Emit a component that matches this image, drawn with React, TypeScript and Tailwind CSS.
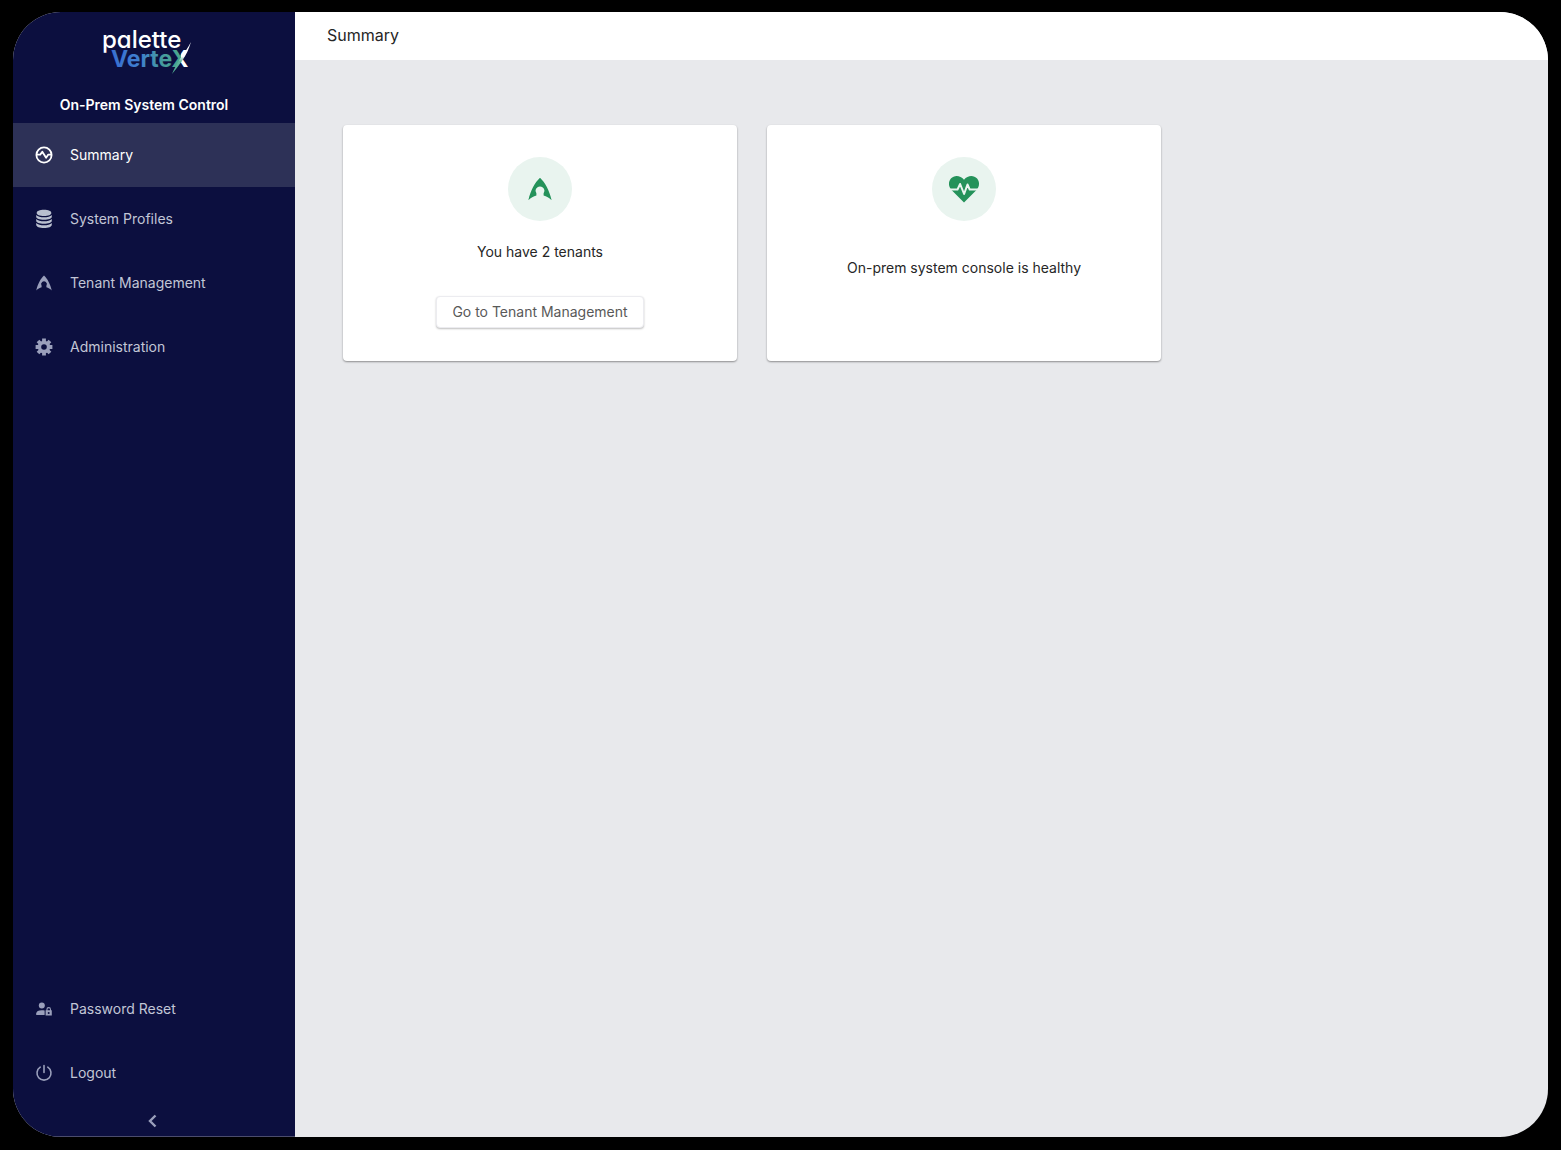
import type { ReactNode } from "react";

function Logo() {
  return (
    <svg className="overflow-visible" width="92" height="48" viewBox="0 0 92 48" role="img" aria-label="Palette VerteX">
      <defs>
        <linearGradient id="vertex" gradientUnits="userSpaceOnUse" x1="9" y1="0" x2="89" y2="0">
          <stop offset="0.1" stopColor="#3a72d0" />
          <stop offset="0.35" stopColor="#3f7fd0" />
          <stop offset="0.65" stopColor="#459b9c" />
          <stop offset="0.87" stopColor="#4aa88c" />
          <stop offset="0.87" stopColor="#ffffff" />
        </linearGradient>
        <linearGradient id="slash" gradientUnits="userSpaceOnUse" x1="0" y1="13" x2="0" y2="47">
          <stop offset="0.45" stopColor="#ffffff" />
          <stop offset="0.6" stopColor="#5fb39c" />
          <stop offset="1" stopColor="#4aa88c" />
        </linearGradient>
      </defs>
      <text x="0" y="20" fill="#fff" fontFamily="Inter, sans-serif" fontSize="24" fontWeight="500" style={{ fontFeatureSettings: '"cv11"' }}>palette</text>
      <text x="9" y="39" fill="url(#vertex)" fontFamily="Inter, sans-serif" fontSize="23" fontWeight="700">VerteX</text>
      <path d="M89 14 C86 20 82 25 78 31 C74 37 72 41 70 46 C74 41 77 37 80 33 C84 27 87 21 89 14 Z" fill="url(#slash)" />
    </svg>
  );
}

function PulseIcon() {
  return (
    <svg width="18" height="18" viewBox="0 0 18 18" fill="none" stroke="currentColor" strokeWidth="1.8" strokeLinejoin="round" aria-hidden="true">
      <circle cx="9" cy="9" r="7.6" />
      <path d="M1.4 8.600h3.800L7.300 5.800l3.800 5.900 2.200-3.100h3.200" />
    </svg>
  );
}

function StackIcon() {
  return (
    <svg className="text-[#b9bfcf]" width="18" height="20" viewBox="0 0 18 20" fill="currentColor" aria-hidden="true">
      <path d="M9 .8c4.400 0 7.300 1.300 7.300 3.100S13.400 7 9 7 1.700 5.700 1.700 3.900 4.600.8 9 .8z" />
      <path d="M1.200 6C2.700 7.600 5.600 8.300 9 8.300s6.300-.7 7.800-2.300v1.700c0 1.800-3.400 3-7.800 3s-7.800-1.200-7.800-3z" />
      <path d="M1.200 10c1.500 1.600 4.400 2.300 7.800 2.300s6.300-.7 7.800-2.300v1.700c0 1.800-3.400 3-7.800 3s-7.800-1.200-7.800-3z" />
      <path d="M1.200 14c1.500 1.600 4.400 2.300 7.800 2.300s6.300-.7 7.800-2.300v1.700c0 2-3.400 3.300-7.800 3.300s-7.800-1.300-7.800-3.300z" />
    </svg>
  );
}

function TenantIcon({ className }: { className: string }) {
  return (
    <svg className={className} viewBox="0 0 24 24" fill="currentColor" aria-hidden="true">
      <path d="M12 .8C7 5.400 2.600 13.500.4 23.200c2.400-2.300 5.200-4 8-4.700v-2.300a4.300 4.300 0 1 1 7.200 0v2.300c2.800.7 5.600 2.400 8 4.700C21.400 13.500 17 5.400 12 .8z" />
    </svg>
  );
}

function GearIcon() {
  return (
    <svg width="18" height="18" viewBox="0 0 18 18" aria-hidden="true">
      <g stroke="currentColor" strokeWidth="3.800" strokeLinecap="butt">
        <path d="M9 .6v16.800M.6 9h16.800M3 3l12 12M15 3L3 15" />
      </g>
      <circle cx="9" cy="9" r="6.300" fill="currentColor" />
      <circle cx="9" cy="9" r="2.800" fill="#0c0f3f" />
    </svg>
  );
}

function UserLockIcon() {
  return (
    <svg width="18" height="16" viewBox="0 0 18 16" fill="currentColor" aria-hidden="true">
      <circle cx="6.800" cy="4.500" r="3" />
      <path d="M1.200 14v-1.400C1.200 10.400 3.500 9.200 6.800 9.200c1 0 2 .1 2.800.4V14z" />
      <path fillRule="evenodd" d="M10.600 9.300h.8V8.400a2.300 2.300 0 0 1 4.600 0v.9h.8v5.200h-6.200zM12.500 9.300H15v-.9a1.250 1.250 0 0 0-2.500 0zM13.700 11a1 1 0 1 0 .01 2 1 1 0 0 0-.01-2z" />
    </svg>
  );
}

function PowerIcon() {
  return (
    <svg width="18" height="18" viewBox="0 0 18 18" fill="none" stroke="currentColor" strokeWidth="1.600" strokeLinecap="round" aria-hidden="true">
      <path d="M9 1.500v7M5.200 3.200a7 7 0 1 0 7.600 0" />
    </svg>
  );
}

function HeartPulseIcon() {
  return (
    <svg width="32" height="28" viewBox="0 0 32 28" aria-hidden="true">
      <path d="M16 27.500L3.500 15C.3 11.700.2 6.600 2.900 3.600 6.300-.1 12.200.2 16 4.700 19.800.2 25.700-.1 29.100 3.600c2.700 3 2.600 8.100-.6 11.400z" fill="#24925a" />
      <path d="M0 14.500h9.500l2.600-5.500 4 10 3.400-9.500 2.200 5H32" fill="none" stroke="#e9f4ef" strokeWidth="2" strokeLinejoin="round" />
    </svg>
  );
}

function NavItem({ icon, label, active = false }: { icon: ReactNode; label: string; active?: boolean }) {
  return (
    <a
      href="#"
      aria-current={active ? "page" : undefined}
      className={
        active
          ? "flex h-16 items-center bg-[#2d3157] pl-[21px] text-sm text-white"
          : "flex h-16 items-center pl-[21px] text-sm text-[#c2c6d6]"
      }
    >
      <span className={active ? "flex w-5 justify-center" : "flex w-5 justify-center text-[#9a9fbb]"}>{icon}</span>
      <span className="ml-4">{label}</span>
    </a>
  );
}

function Card({ icon, children }: { icon: ReactNode; children: ReactNode }) {
  return (
    <section className="flex min-h-[236px] max-w-[394px] flex-1 flex-col items-center rounded bg-white py-8 text-sm text-[#262626] shadow-[0_1px_2px_rgba(0,0,0,0.4)]">
      <div className="flex size-16 items-center justify-center rounded-full bg-[#e9f4ef] text-[#24925a]">{icon}</div>
      {children}
    </section>
  );
}

export default function App() {
  return (
    <div className="min-h-screen bg-black px-[13px] pt-3 pb-[13px] font-[Inter,sans-serif]">
      <div className="flex min-h-[calc(100vh-25px)] overflow-hidden rounded-[48px] bg-[#e8e9ec]">
        <aside className="flex w-[282px] shrink-0 flex-col bg-[#0c0f3f]">
          <div className="pt-4 pb-2">
            <div className="ml-[89px]">
              <Logo />
            </div>
            <p className="mt-[19px] pr-5 text-center text-sm font-semibold text-white">On-Prem System Control</p>
          </div>
          <nav aria-label="Main">
            <NavItem active icon={<PulseIcon />} label="Summary" />
            <NavItem icon={<StackIcon />} label="System Profiles" />
            <NavItem icon={<TenantIcon className="size-4" />} label="Tenant Management" />
            <NavItem icon={<GearIcon />} label="Administration" />
          </nav>
          <nav aria-label="Account" className="mt-auto">
            <NavItem icon={<UserLockIcon />} label="Password Reset" />
            <NavItem icon={<PowerIcon />} label="Logout" />
          </nav>
          <button type="button" aria-label="Collapse sidebar" className="flex h-8 items-center justify-center border-b border-[#4b4c6c] pr-0.5 text-[#9a9fbb]">
            <svg width="10" height="14" viewBox="0 0 10 14" fill="none" stroke="currentColor" strokeWidth="2.400" aria-hidden="true">
              <path d="M7.500 1.500L2 7l5.500 5.500" />
            </svg>
          </button>
        </aside>
        <div className="flex flex-1 flex-col">
          <header className="flex h-12 items-center bg-white px-8 pb-0.5">
            <h1 className="text-base text-[#262626]">Summary</h1>
          </header>
          <main className="flex gap-[30px] px-12 pt-[65px]">
            <Card icon={<TenantIcon className="size-6" />}>
              <p className="mt-[21px]">You have 2 tenants</p>
              <button type="button" className="mt-[34px] h-8 rounded border border-[#ececf0] bg-white px-[15px] text-[#595959] shadow-[0_1px_2px_rgba(0,0,0,0.25)]">
                Go to Tenant Management
              </button>
            </Card>
            <Card icon={<HeartPulseIcon />}>
              <p className="mt-[37px]">On-prem system console is healthy</p>
            </Card>
          </main>
        </div>
      </div>
    </div>
  );
}
